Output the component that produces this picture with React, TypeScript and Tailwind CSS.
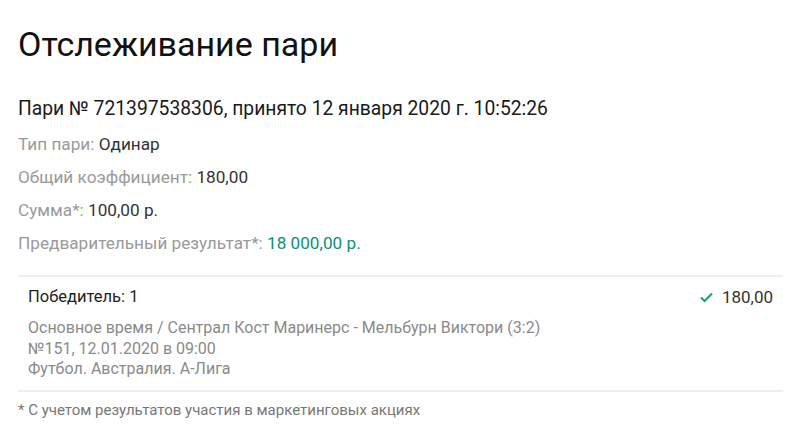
export default function App() {
  return (
    <div className="w-[800px] h-[436px] bg-white pl-[18px] pr-[17px] pt-[22px] text-[#222] overflow-hidden" style={{ fontFamily: 'Roboto, "Noto Sans", sans-serif' }}>
      <h1 className="text-[34px] leading-[44px] font-normal text-[#111]">Отслеживание пари</h1>

      <div className="mt-[31px] text-[19.3px] leading-[24px] text-[#1a1a1a]">
        Пари № 721397538306, принято 12 января 2020 г. 10:52:26
      </div>

      <div className="mt-[13px] flex flex-col gap-[13px] text-[17.2px] leading-[20px]">
        <div>
          <span className="text-[#9a9a9a]">Тип пари: </span>
          <span className="text-[#333]">Одинар</span>
        </div>
        <div>
          <span className="text-[#9a9a9a]">Общий коэффициент: </span>
          <span className="text-[#333]">180,00</span>
        </div>
        <div>
          <span className="text-[#9a9a9a]">Сумма*: </span>
          <span className="text-[#333]">100,00 р.</span>
        </div>
        <div>
          <span className="text-[#9a9a9a]">Предварительный результат*: </span>
          <span className="text-[#0b8f78]">18 000,00 р.</span>
        </div>
      </div>

      <div className="mt-[22px] border-t-2 border-b-2 border-[#eeeeee] pl-[10px] pr-[10px] pt-[9px] pb-[10px]">
        <div className="flex items-center justify-between">
          <span className="text-[16.5px] leading-[22px] text-[#222]">Победитель: 1</span>
          <span className="flex items-center gap-[9px] text-[17px] leading-[22px] text-[#333]">
            <svg width="13" height="11" viewBox="0 0 13 11" fill="none">
              <path d="M1 5.6 L4.6 9 L12 1.5" stroke="#12a07f" strokeWidth="2" />
            </svg>
            180,00
          </span>
        </div>
        <div className="mt-[10px] text-[16px] leading-[20.5px] text-[#8a8a8a]">
          <div>Основное время / Сентрал Кост Маринерс - Мельбурн Виктори (3:2)</div>
          <div>№151, 12.01.2020 в 09:00</div>
          <div>Футбол. Австралия. А-Лига</div>
        </div>
      </div>

      <div className="mt-[9px] text-[15px] leading-[18px] text-[#777]">
        * С учетом результатов участия в маркетинговых акциях
      </div>
    </div>
  )
}
